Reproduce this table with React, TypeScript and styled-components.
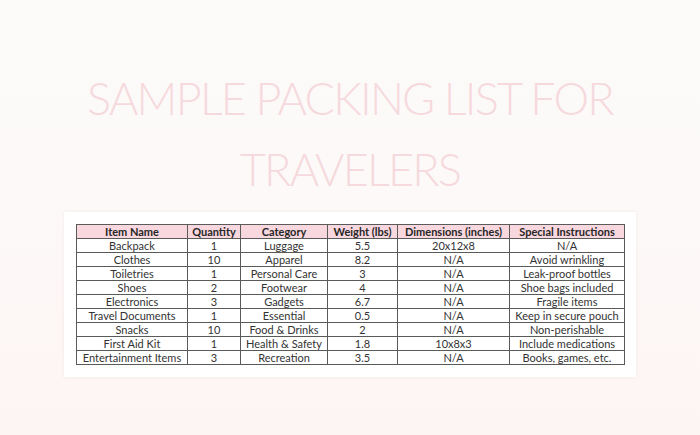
import React from "react";
import styled, { createGlobalStyle } from "styled-components";

const GlobalStyle = createGlobalStyle`
  html, body {
    margin: 0;
    padding: 0;
  }
  body {
    font-family: "Lato", "Liberation Sans", sans-serif;
  }
`;

const Page = styled.div`
  width: 700px;
  height: 435px;
  overflow: hidden;
  background: linear-gradient(180deg, #fcfbfa 0%, #fcf9f8 45%, #fdf5f4 100%);
  display: flex;
  flex-direction: column;
  align-items: center;
`;

const Title = styled.h1`
  margin: 63px 0 0;
  width: 600px;
  text-align: center;
  font-family: "Lato", "Liberation Sans", sans-serif;
  font-weight: 300;
  font-size: 45px;
  line-height: 71px;
  color: #f6d9dd;
  letter-spacing: -1.8px;
`;

const Card = styled.div`
  margin-top: 7px;
  width: 548px;
  padding: 12px;
  background: #ffffff;
  box-shadow: 0 0 3px rgba(240, 220, 220, 0.5);
`;

const Table = styled.table`
  width: 548px;
  border-collapse: collapse;
  table-layout: fixed;
  font-family: "Lato", "Liberation Sans", sans-serif;
  font-size: 11px;
  color: #333333;
`;

const Head = styled.th`
  height: 13px;
  padding: 0;
  background: #f8d7de;
  border: 1px solid #5a5a5a;
  font-weight: 700;
  color: #262626;
  text-align: center;
  line-height: 12px;
  white-space: nowrap;
`;

const Cell = styled.td`
  height: 13px;
  padding: 0;
  border: 1px solid #5a5a5a;
  text-align: center;
  line-height: 12px;
  white-space: nowrap;
`;

const columns = [
  { label: "Item Name", width: 111 },
  { label: "Quantity", width: 53 },
  { label: "Category", width: 87 },
  { label: "Weight (lbs)", width: 70 },
  { label: "Dimensions (inches)", width: 112 },
  { label: "Special Instructions", width: 115 },
];

const rows = [
  ["Backpack", "1", "Luggage", "5.5", "20x12x8", "N/A"],
  ["Clothes", "10", "Apparel", "8.2", "N/A", "Avoid wrinkling"],
  ["Toiletries", "1", "Personal Care", "3", "N/A", "Leak-proof bottles"],
  ["Shoes", "2", "Footwear", "4", "N/A", "Shoe bags included"],
  ["Electronics", "3", "Gadgets", "6.7", "N/A", "Fragile items"],
  ["Travel Documents", "1", "Essential", "0.5", "N/A", "Keep in secure pouch"],
  ["Snacks", "10", "Food & Drinks", "2", "N/A", "Non-perishable"],
  ["First Aid Kit", "1", "Health & Safety", "1.8", "10x8x3", "Include medications"],
  ["Entertainment Items", "3", "Recreation", "3.5", "N/A", "Books, games, etc."],
];

export default function App() {
  return (
    <Page>
      <GlobalStyle />
      <Title>SAMPLE PACKING LIST FOR TRAVELERS</Title>
      <Card>
        <Table>
          <colgroup>
            {columns.map((c) => (
              <col key={c.label} style={{ width: c.width }} />
            ))}
          </colgroup>
          <thead>
            <tr>
              {columns.map((c) => (
                <Head key={c.label}>{c.label}</Head>
              ))}
            </tr>
          </thead>
          <tbody>
            {rows.map((r, i) => (
              <tr key={i}>
                {r.map((v, j) => (
                  <Cell key={j}>{v}</Cell>
                ))}
              </tr>
            ))}
          </tbody>
        </Table>
      </Card>
    </Page>
  );
}
